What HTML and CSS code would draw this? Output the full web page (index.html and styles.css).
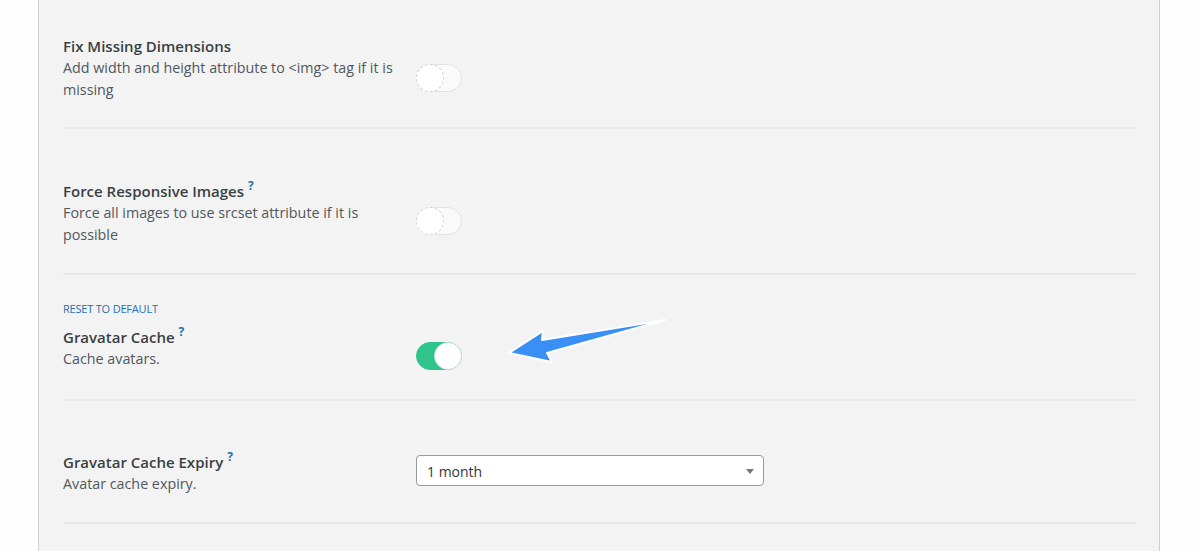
FILE: index.html
```html
<!DOCTYPE html>
<html>
<head>
<meta charset="utf-8">
<link rel="stylesheet" href="styles.css">
</head>
<body>
<div class="page">
  <div class="panel">
    <div class="row row-first">
      <div class="label">
        <div class="title">Fix Missing Dimensions</div>
        <div class="desc">Add width and height attribute to &lt;img&gt; tag if it is missing</div>
      </div>
      <div class="control ctl-1"><span class="toggle"><span class="knob"></span></span></div>
    </div>
    <div class="row">
      <div class="label">
        <div class="title">Force Responsive Images<sup class="help">?</sup></div>
        <div class="desc">Force all images to use srcset attribute if it is possible</div>
      </div>
      <div class="control ctl-2"><span class="toggle"><span class="knob"></span></span></div>
    </div>
    <div class="row row-reset">
      <a class="reset">Reset to default</a>
      <div class="row-inner">
        <div class="label">
          <div class="title">Gravatar Cache<sup class="help">?</sup></div>
          <div class="desc">Cache avatars.</div>
        </div>
        <div class="control ctl-3"><span class="toggle on"><span class="knob"></span></span></div>
      </div>
    </div>
    <div class="row row-last">
      <div class="label">
        <div class="title">Gravatar Cache Expiry<sup class="help">?</sup></div>
        <div class="desc">Avatar cache expiry.</div>
      </div>
      <div class="control ctl-4">
        <div class="select"><span>1 month</span><span class="caret"></span></div>
      </div>
    </div>
  </div>
  <svg class="arrow" width="170" height="56" viewBox="500 314 170 56">
    <path d="M509 353 L543 331 L542 340 L665 320 L547 353 L552 362 Z" fill="#3a8ff5" stroke="#ffffff" stroke-width="2" stroke-linejoin="round"/>
  </svg>
</div>
</body>
</html>
```
FILE: styles.css
```css
html, body {
  margin: 0;
  padding: 0;
  background: #fefefe;
}
.page {
  position: relative;
  width: 1200px;
  height: 551px;
  overflow: hidden;
  font-family: "Open Sans", "Noto Sans", sans-serif;
}
.panel {
  box-sizing: border-box;
  margin-left: 38px;
  width: 1122px;
  height: 600px;
  background: #f3f3f3;
  border-left: 1px solid #cfcfcf;
  border-right: 1px solid #cfcfcf;
  padding: 0 23px 0 24px;
}
.row {
  display: flex;
  padding: 51px 0 27px;
  border-bottom: 2px solid #e8e8e8;
}
.row-first {
  padding-top: 35px;
  padding-bottom: 26px;
}
.row-reset {
  display: block;
  padding-top: 24px;
  padding-bottom: 29px;
}
.row-last {
  padding-top: 50px;
  padding-bottom: 27px;
}
.row-inner {
  display: flex;
}
.label {
  width: 353px;
  flex: none;
}
.title {
  font-size: 15px;
  font-weight: 600;
  line-height: 22px;
  color: #3a3f44;
}
.help {
  font-size: 12px;
  font-weight: 700;
  color: #2271b1;
  margin-left: 4px;
  vertical-align: 7px;
  line-height: 0;
}
.desc {
  font-size: 14.3px;
  line-height: 22px;
  color: #50575e;
  width: 345px;
}
.reset {
  display: block;
  font-size: 11px;
  line-height: 20px;
  height: 20px;
  margin-bottom: 7px;
  text-transform: uppercase;
  color: #2271b1;
  letter-spacing: -0.2px;
}
.control {
  flex: none;
}
.ctl-1 { margin-top: 29px; }
.ctl-2 { margin-top: 27px; }
.ctl-3 { margin-top: 16px; }
.ctl-4 { margin-top: 4px; }
.toggle {
  display: block;
  position: relative;
  width: 44px;
  height: 26px;
  border: 1px solid #e2e2e2;
  border-radius: 14px;
  background: #fafafa;
}
.toggle .knob {
  position: absolute;
  left: -1px;
  top: -1px;
  width: 26px;
  height: 26px;
  border: 1px dashed #d4d4d4;
  border-radius: 50%;
  background: #fff;
}
.toggle.on {
  background: #2ec48c;
  border-color: #2ec48c;
}
.toggle.on .knob {
  left: auto;
  right: -1px;
  border: 1px solid #cfe3ea;
}
.select {
  position: relative;
  box-sizing: border-box;
  width: 348px;
  height: 31px;
  border: 1px solid #9a9a9a;
  border-radius: 4px;
  background: #fff;
  display: flex;
  align-items: center;
  padding-left: 10px;
  padding-top: 2px;
  font-size: 14px;
  color: #32373c;
}
.caret {
  position: absolute;
  right: 9px;
  top: 13px;
  width: 0;
  height: 0;
  border-left: 4px solid transparent;
  border-right: 4px solid transparent;
  border-top: 5px solid #777;
}
.arrow {
  position: absolute;
  left: 500px;
  top: 314px;
}
```
